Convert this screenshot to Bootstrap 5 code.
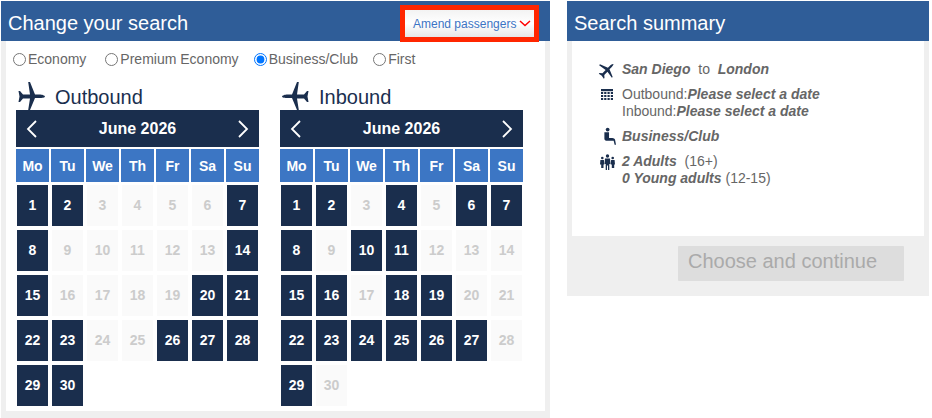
<!DOCTYPE html>
<html lang="en">
<head>
<meta charset="utf-8">
<title>Change your search</title>
<link rel="stylesheet" href="https://cdn.jsdelivr.net/npm/bootstrap@5.3.0/dist/css/bootstrap.min.css">
<style>
html,body{height:418px;overflow:hidden}
body{font-family:"Liberation Sans",Arial,sans-serif;color:#666;background:#fff;font-size:14px;padding:1px 3px 0 1px}
.shell{gap:17px;height:417px}
.pane-left{width:549px;background:#efefef}
.pane-right{width:362px;height:295px;background:#efefef}
.pane-head{height:40px;background:#2f5d98;color:#fff;font-size:20px;padding:3px 0 0 7px}
.pane-inner{margin:0 5px;background:#fff}
.pane-left .pane-inner{height:370px}
.pane-right .pane-inner{height:195px}
.amend{margin-right:11px;margin-top:1px;height:37px;width:139px;border:5px solid #ff2600;background:linear-gradient(#f3f3f3,#fff 50%,#e6e6e6);color:#3c74c4;font-size:12px;padding:0 0 0 8px;align-self:flex-start}
.amend svg{margin-left:3px}
.cabin{padding:8px 0 0 7px;gap:15px;height:40px;line-height:20px}
.cabin label{display:flex;align-items:center;gap:2px}
.cabin label:first-child{margin-right:4px}
.cabin input{margin:0;width:13px;height:13px}
.cal-row{gap:21px;padding-left:10px}
.cal{width:243px}
.cal-title{height:29px;color:#1a2f4f;font-size:20px;line-height:30px;padding:1px 0 0 2px;gap:10px}
.flip{transform:scaleX(-1)}
.cal-nav{height:37px;background:#1a2e4d;color:#fff;font-weight:700;font-size:16px;padding:0 10px;margin-bottom:2px}
.week,.days{display:grid;grid-template-columns:repeat(7,33px);column-gap:2px}
.week div{height:33px;background:#3c76c4;color:#fff;font-weight:700;font-size:14px;line-height:35px;text-align:center}
.days{row-gap:4px;margin-top:3px}
.day{height:41px;margin:0 1px;background:#fafafa;color:#ccc;font-weight:700;font-size:14px;line-height:41px;text-align:center}
.day.open{background:#1a2e4d;color:#fff}
.sum{padding:20px 0 0 26px;line-height:17px;font-size:14px}
.sum-row{display:flex;margin-bottom:8px}
.sum-ico{width:24px;flex:none;height:17px;display:flex;justify-content:center;align-items:center;color:#1a2e4d;padding-right:6px}
.go-row{padding:10px 25px 0 0}
.go{width:226px;height:35px;background:#ddd;color:#aaa;font-size:20px;line-height:31px;padding-left:10px;border-radius:1px}
</style>
</head>
<body>
<div class="d-flex shell">
  <section class="pane-left">
    <div class="pane-head d-flex justify-content-between align-items-center">
      <span>Change your search</span>
      <div class="amend d-flex align-items-center"><span>Amend passengers</span><svg width="12" height="7" viewBox="0 0 12 7"><path d="M1 1l5 4.500 5-4.500" fill="none" stroke="#f00" stroke-width="1.500"/></svg></div>
    </div>
    <div class="pane-inner">
      <div class="cabin d-flex align-items-start">
        <label><input type="radio" name="cabin">Economy</label>
        <label><input type="radio" name="cabin">Premium Economy</label>
        <label><input type="radio" name="cabin" checked>Business/Club</label>
        <label><input type="radio" name="cabin">First</label>
      </div>
      <div class="cal-row d-flex" id="cals"></div>
    </div>
  </section>
  <section class="pane-right">
    <div class="pane-head d-flex align-items-center">Search summary</div>
    <div class="pane-inner">
      <div class="sum">
        <div class="sum-row"><span class="sum-ico"><svg width="18" height="18" viewBox="0 0 27 28"><path fill="currentColor" transform="rotate(-45 13.500 14)" d="M27 14.500c0-1-3-2-5.500-2H17L12 0h-1.800l1.800 12.500H5L2 9H.5L1.500 14.500.5 20H2l3-3.500h7L10.200 28H12l5-12h4.500C24 16 27 15.500 27 14.500z"/></svg></span><span><b><i>San Diego</i></b>&nbsp; to &nbsp;<b><i>London</i></b></span></div>
        <div class="sum-row"><span class="sum-ico"><svg width="12" height="12" viewBox="0 0 12 12"><path fill="currentColor" d="M0 0h12v2.200H0z"/><path fill="currentColor" d="M0 3h2.200v2H0zM3.200 3h2.200v2H3.200zM6.500 3h2.200v2H6.500zM9.800 3H12v2H9.800zM0 6h2.200v2H0zM3.200 6h2.200v2H3.200zM6.500 6h2.200v2H6.500zM9.800 6H12v2H9.800zM0 9h2.200v2H0zM3.200 9h2.200v2H3.200zM6.500 9h2.200v2H6.500zM9.800 9H12v2H9.800z"/></svg></span><span>Outbound:<b><i>Please select a date</i></b><br>Inbound:<b><i>Please select a date</i></b></span></div>
        <div class="sum-row"><span class="sum-ico"><svg class="ms-1" width="13" height="19" viewBox="0 0 14 19"><circle cx="5" cy="2" r="2" fill="currentColor"/><path fill="currentColor" d="M1.500 5h5v6h3.500c1.500 0 2.500.8 3 2l1 5.500h-1.500l-1-4.500H3.500c-1.200 0-2-.8-2-2z"/></svg></span><span><b><i>Business/Club</i></b></span></div>
        <div class="sum-row"><span class="sum-ico"><svg width="15" height="16" viewBox="0 0 15 16"><g fill="currentColor"><circle cx="7.500" cy="2" r="1.700"/><path d="M5 4.500h5l.5 5.500H9.300v6H8V11.500H7V16H5.700V10H4.500z"/><circle cx="2.300" cy="4" r="1.300"/><path d="M.4 6h3.500l.4 4.500h-.8V14H1.200v-3.500H0z"/><circle cx="12.700" cy="4" r="1.300"/><path d="M11.100 6h3.500l.4 4.500h-.8V14h-2.400v-3.500h-1.100z"/></g></svg></span><span><b><i>2 Adults</i></b>&nbsp; (16+)<br><b><i>0 Young adults</i></b> (12-15)</span></div>
      </div>
    </div>
    <div class="go-row d-flex justify-content-end"><div class="go">Choose and continue</div></div>
  </section>
</div>
<script>
function plane(flip){return '<svg class="'+(flip?'flip':'')+'" width="27" height="28" viewBox="0 0 27 28"><path fill="#1a2e4d" d="M27 14.500c0-1-3-2-5.500-2H17L12 0h-1.800l1.800 12.500H5L2 9H.5L1.500 14.500.5 20H2l3-3.500h7L10.200 28H12l5-12h4.500C24 16 27 15.500 27 14.500z"/></svg>';}
function cal(t,open,flip){
  var d='';for(var i=1;i<=30;i++){d+='<div class="day'+(open.indexOf(i)>=0?' open':'')+'">'+i+'</div>';}
  var w=['Mo','Tu','We','Th','Fr','Sa','Su'].map(function(x){return '<div>'+x+'</div>';}).join('');
  return '<div class="cal"><div class="cal-title d-flex">'+plane(flip)+'<span>'+t+'</span></div>'+
  '<div class="cal-nav d-flex justify-content-between align-items-center"><svg width="11" height="18" viewBox="0 0 11 18"><path d="M10 1L2 9l8 8" fill="none" stroke="#fff" stroke-width="1.800"/></svg><span>June 2026</span><svg width="11" height="18" viewBox="0 0 11 18"><path d="M1 1l8 8-8 8" fill="none" stroke="#fff" stroke-width="1.800"/></svg></div>'+
  '<div class="week">'+w+'</div><div class="days">'+d+'</div></div>';
}
document.getElementById('cals').innerHTML=cal('Outbound',[1,2,7,8,14,15,20,21,22,23,26,27,28,29,30],false)+cal('Inbound',[1,2,4,6,7,8,10,11,15,16,18,19,22,23,24,25,26,27,29],true);
</script>
<script src="https://cdn.jsdelivr.net/npm/bootstrap@5.3.0/dist/js/bootstrap.bundle.min.js"></script>
</body>
</html>
